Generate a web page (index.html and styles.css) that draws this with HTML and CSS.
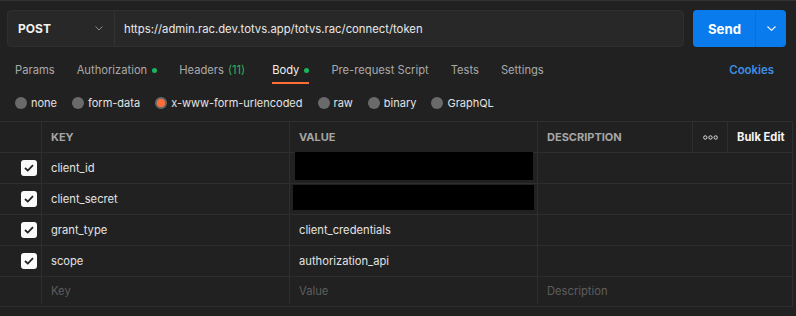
FILE: index.html
```html
<!DOCTYPE html>
<html lang="en">
<head>
    <meta charset="UTF-8">
    <title>Request - POST token</title>
    <link rel="stylesheet" href="styles.css">
</head>
<body>
    <div class="request-bar">
        <div class="url-box">
            <div class="method">
                <span>POST</span>
                <svg class="chevron" width="8" height="5" viewBox="0 0 8 5"><path d="M0.5 0.5 L4 4 L7.5 0.5" fill="none" stroke="#8a8a8a" stroke-width="1"/></svg>
            </div>
            <div class="url">https://admin.rac.dev.totvs.app/totvs.rac/connect/token</div>
        </div>
        <div class="send">
            <span class="send-label">Send</span>
            <span class="send-more">
                <svg width="9" height="5" viewBox="0 0 9 5"><path d="M0.5 0.5 L4.5 4.3 L8.5 0.5" fill="none" stroke="#ffffff" stroke-width="1.1"/></svg>
            </span>
        </div>
    </div>

    <nav class="tabs">
        <span class="tab">Params</span>
        <span class="tab">Authorization <i class="dot"></i></span>
        <span class="tab">Headers <em class="count">(11)</em></span>
        <span class="tab active">Body <i class="dot"></i></span>
        <span class="tab">Pre-request Script</span>
        <span class="tab">Tests</span>
        <span class="tab">Settings</span>
        <span class="tab cookies">Cookies</span>
    </nav>

    <div class="body-types">
        <label class="radio"><i class="circle"></i>none</label>
        <label class="radio"><i class="circle"></i>form-data</label>
        <label class="radio"><i class="circle checked"></i>x-www-form-urlencoded</label>
        <label class="radio"><i class="circle"></i>raw</label>
        <label class="radio"><i class="circle"></i>binary</label>
        <label class="radio"><i class="circle"></i>GraphQL</label>
    </div>

    <div class="params">
        <div class="row head">
            <div class="cell"></div>
            <div class="cell label">KEY</div>
            <div class="cell label">VALUE</div>
            <div class="cell label">DESCRIPTION</div>
            <div class="cell more">
                <svg width="15" height="5" viewBox="0 0 15 5"><circle cx="2.3" cy="2.5" r="1.7" fill="none" stroke="#ddd" stroke-width="1"/><circle cx="7.5" cy="2.5" r="1.7" fill="none" stroke="#ddd" stroke-width="1"/><circle cx="12.7" cy="2.5" r="1.7" fill="none" stroke="#ddd" stroke-width="1"/></svg>
            </div>
            <div class="cell bulk">Bulk Edit</div>
        </div>
        <div class="row">
            <div class="cell check"><span class="box"><svg width="10" height="8" viewBox="0 0 10 8"><path d="M1 4 L3.8 6.6 L9 1.2" fill="none" stroke="#222" stroke-width="1.8"/></svg></span></div>
            <div class="cell">client_id</div>
            <div class="cell"><span class="redact r1"></span></div>
            <div class="cell"></div>
        </div>
        <div class="row">
            <div class="cell check"><span class="box"><svg width="10" height="8" viewBox="0 0 10 8"><path d="M1 4 L3.8 6.6 L9 1.2" fill="none" stroke="#222" stroke-width="1.8"/></svg></span></div>
            <div class="cell">client_secret</div>
            <div class="cell"><span class="redact r2"></span></div>
            <div class="cell"></div>
        </div>
        <div class="row">
            <div class="cell check"><span class="box"><svg width="10" height="8" viewBox="0 0 10 8"><path d="M1 4 L3.8 6.6 L9 1.2" fill="none" stroke="#222" stroke-width="1.8"/></svg></span></div>
            <div class="cell">grant_type</div>
            <div class="cell">client_credentials</div>
            <div class="cell"></div>
        </div>
        <div class="row">
            <div class="cell check"><span class="box"><svg width="10" height="8" viewBox="0 0 10 8"><path d="M1 4 L3.8 6.6 L9 1.2" fill="none" stroke="#222" stroke-width="1.8"/></svg></span></div>
            <div class="cell">scope</div>
            <div class="cell">authorization_api</div>
            <div class="cell"></div>
        </div>
        <div class="row new">
            <div class="cell"></div>
            <div class="cell placeholder">Key</div>
            <div class="cell placeholder">Value</div>
            <div class="cell placeholder">Description</div>
        </div>
    </div>
</body>
</html>
```

FILE: styles.css
```css
body {
    margin: 0;
    background: #212121;
    color: #e3e3e3;
    font-family: Inter, "Noto Sans", sans-serif;
    font-size: 11.2px;
    border-top: 1px solid #323232;
    height: 315px;
    overflow: hidden;
}

.request-bar {
    display: flex;
    gap: 9px;
    padding: 9px 10px 0 7px;
    height: 37px;
}

.url-box {
    flex: 1;
    display: flex;
    background: #282828;
    border: 1px solid #2f2f2f;
    border-radius: 4px;
}

.method {
    width: 107px;
    display: flex;
    align-items: center;
    justify-content: space-between;
    padding: 0 11px 0 10px;
    box-sizing: border-box;
    border-right: 1px solid #333;
    font-weight: 700;
    font-size: 12px;
    color: #f2f2f2;
}

.url {
    display: flex;
    align-items: center;
    padding-left: 9px;
    font-size: 11.3px;
    color: #e8e8e8;
}

.send {
    width: 93px;
    display: flex;
    background: #097bed;
    border-radius: 4px;
    color: #fff;
}

.send-label {
    flex: 1;
    display: flex;
    align-items: center;
    justify-content: center;
    font-weight: 700;
    font-size: 13.2px;
    padding-left: 1px;
}

.send-more {
    width: 30px;
    display: flex;
    align-items: center;
    justify-content: center;
    border-left: 1px solid #0b6fd4;
}

.tabs {
    display: flex;
    gap: 22px;
    margin-top: 15px;
    padding: 0 22px 0 15px;
}

.tab {
    display: flex;
    align-items: center;
    gap: 5px;
    line-height: 16px;
    padding-bottom: 4px;
    border-bottom: 2px solid transparent;
    color: #a9a9a9;
    font-size: 11.2px;
}

.tab.active {
    color: #f0f0f0;
    border-bottom-color: #ff6c37;
}

.tab.cookies {
    margin-left: auto;
    color: #3d8fe6;
    font-weight: 600;
    font-size: 11.4px;
}

.dot {
    width: 5px;
    height: 5px;
    border-radius: 50%;
    background: #1bb55c;
}

.count {
    font-style: normal;
    color: #2fb160;
    margin: 0 5px 0 -1px;
}

.body-types {
    display: flex;
    gap: 15px;
    padding: 7px 0 0 15px;
    height: 24px;
    align-items: center;
}

.radio {
    display: flex;
    align-items: center;
    gap: 4px;
    font-size: 11px;
    color: #e3e3e3;
}

.circle {
    width: 12px;
    height: 12px;
    border-radius: 50%;
    background: #6a6a6a;
    box-sizing: border-box;
}

.circle.checked {
    background: #ff6c37;
    border: 2px solid #6a6a6a;
}

.params {
    margin-top: 6px;
    width: 793px;
    border-top: 1px solid #2e2e2e;
}

.row {
    display: grid;
    grid-template-columns: 41px 248px 248px 1fr;
    height: 31px;
    box-sizing: border-box;
    border-bottom: 1px solid #2e2e2e;
    border-right: 1px solid #2e2e2e;
}

.row.head {
    grid-template-columns: 41px 248px 248px 155px 35px 1fr;
}

.row.new {
    height: 30px;
    padding-bottom: 2px;
}

.cell {
    display: flex;
    align-items: center;
    padding-left: 9px;
    border-left: 1px solid #2e2e2e;
    position: relative;
    font-size: 11.2px;
}

.cell:first-child {
    border-left: 0;
    padding-left: 0;
}

.cell.label {
    color: #a6a6a6;
    font-weight: 700;
    font-size: 11px;
}

.cell.more {
    padding-left: 10px;
}

.cell.bulk {
    font-weight: 700;
    color: #f5f5f5;
    padding-left: 9px;
}

.cell.check {
    justify-content: flex-end;
    padding-right: 4px;
}

.box {
    width: 16px;
    height: 16px;
    border-radius: 3px;
    background: #fafafa;
    display: flex;
    align-items: center;
    justify-content: center;
}

.placeholder {
    color: #5e5e5e;
}

.redact {
    position: absolute;
    background: #000;
}

.redact.r1 {
    left: 5px;
    top: -1px;
    width: 238px;
    height: 28px;
}

.redact.r2 {
    left: 3px;
    top: 1px;
    width: 241px;
    height: 25px;
}
```
